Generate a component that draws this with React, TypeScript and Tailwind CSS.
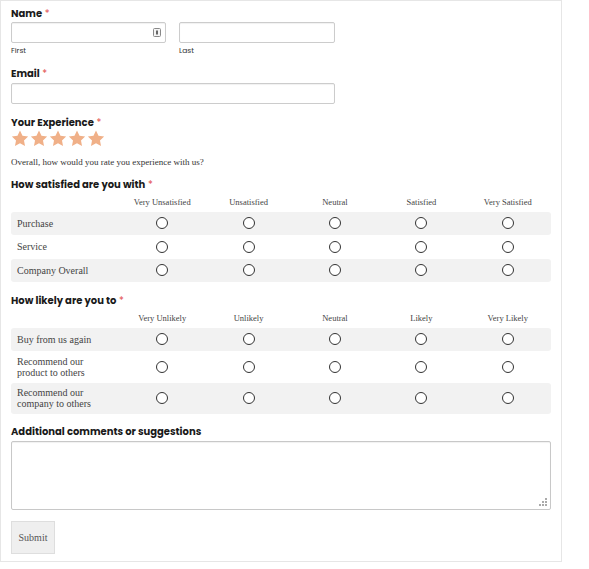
import React from "react";

const sans = { fontFamily: "Poppins, Inter, 'Noto Sans', sans-serif" };
const serif = { fontFamily: "'Liberation Serif', 'DejaVu Serif', serif" };

function Label({ children, req = true, className = "" }: { children: React.ReactNode; req?: boolean; className?: string }) {
  return (
    <div className={`text-[10px] font-bold text-[#1a1a1a] leading-[12px] ${className}`} style={sans}>
      {children}
      {req && <span className="text-[#e3504f] font-normal"> *</span>}
    </div>
  );
}

function Star() {
  return (
    <svg width="18" height="17" viewBox="0 0 24 23">
      <path d="M12 0.8l3.4 7 7.6 1-5.6 5.3 1.4 7.6L12 18l-6.8 3.7 1.4-7.6L1 8.8l7.6-1z" fill="#f0b088" />
    </svg>
  );
}

function Radio() {
  return <div className="w-[12px] h-[12px] rounded-full border border-[#333] bg-white" />;
}

function Matrix({ cols, rows }: { cols: string[]; rows: { label: string[]; shaded: boolean; h: number }[] }) {
  return (
    <div className="w-[540px]" style={serif}>
      <div className="grid grid-cols-[108px_repeat(5,1fr)] h-[18px] items-center">
        <div />
        {cols.map((c) => (
          <div key={c} className="text-center text-[8.5px] text-[#444] leading-none">{c}</div>
        ))}
      </div>
      {rows.map((r, i) => (
        <div
          key={i}
          className={`grid grid-cols-[108px_repeat(5,1fr)] items-center rounded-[3px] ${r.shaded ? "bg-[#f2f2f2]" : ""}`}
          style={{ height: r.h }}
        >
          <div className="pl-[6px] text-[10px] text-[#444] leading-[11px]">
            {r.label.map((l, j) => (
              <div key={j}>{l}</div>
            ))}
          </div>
          {cols.map((c) => (
            <div key={c} className="flex justify-center">
              <Radio />
            </div>
          ))}
        </div>
      ))}
    </div>
  );
}

export default function App() {
  return (
    <div className="w-[589px] h-[569px] bg-white">
      <div className="w-[562px] h-[562px] border border-[#e6e6e6] pl-[10px] pt-[7px]">
        <Label>Name</Label>
        <div className="flex gap-[13px] mt-[2px]">
          <div>
            <div className="w-[155px] h-[21px] border border-[#ccc] rounded-[2px] shadow-[inset_0_1px_1px_rgba(0,0,0,0.06)] flex items-center justify-end pr-[4px]">
              <svg width="8" height="9" viewBox="0 0 8 9">
                <rect x="0.5" y="0.5" width="7" height="8" rx="1" fill="#f4f4f4" stroke="#888" />
                <rect x="3" y="2.5" width="2" height="4" fill="#666" />
              </svg>
            </div>
            <div className="text-[7.5px] text-[#333] mt-[3px] leading-[9px]" style={sans}>First</div>
          </div>
          <div>
            <div className="w-[156px] h-[21px] border border-[#ccc] rounded-[2px] shadow-[inset_0_1px_1px_rgba(0,0,0,0.06)]" />
            <div className="text-[7.5px] text-[#333] mt-[3px] leading-[9px]" style={sans}>Last</div>
          </div>
        </div>
        <Label className="mt-[13px]">Email</Label>
        <div className="w-[324px] h-[21px] border border-[#ccc] rounded-[2px] mt-[3px] shadow-[inset_0_1px_1px_rgba(0,0,0,0.06)]" />

        <Label className="mt-[13px]">Your Experience</Label>
        <div className="flex gap-[1px] mt-[1px]">
          <Star />
          <Star />
          <Star />
          <Star />
          <Star />
        </div>
        <div className="text-[9px] text-[#333] mt-[9px]" style={serif}>
          Overall, how would you rate you experience with us?
        </div>

        <Label className="mt-[9px]">How satisfied are you with</Label>
        <div className="mt-[3px]">
          <Matrix
            cols={["Very Unsatisfied", "Unsatisfied", "Neutral", "Satisfied", "Very Satisfied"]}
            rows={[
              { label: ["Purchase"], shaded: true, h: 23 },
              { label: ["Service"], shaded: false, h: 24 },
              { label: ["Company Overall"], shaded: true, h: 23 },
            ]}
          />
        </div>

        <Label className="mt-[13px]">How likely are you to</Label>
        <div className="mt-[3px]">
          <Matrix
            cols={["Very Unlikely", "Unlikely", "Neutral", "Likely", "Very Likely"]}
            rows={[
              { label: ["Buy from us again"], shaded: true, h: 23 },
              { label: ["Recommend our", "product to others"], shaded: false, h: 32 },
              { label: ["Recommend our", "company to others"], shaded: true, h: 31 },
            ]}
          />
        </div>

        <Label className="mt-[12px]" req={false}>Additional comments or suggestions</Label>
        <div className="relative w-[540px] h-[69px] border border-[#c8c8c8] rounded-[2px] mt-[3px] shadow-[inset_0_1px_1px_rgba(0,0,0,0.06)]">
          <svg className="absolute right-[3px] bottom-[3px]" width="8" height="8" viewBox="0 0 8 8">
            <rect x="6" y="0" width="2" height="2" fill="#aaa" />
            <rect x="3" y="3" width="2" height="2" fill="#aaa" />
            <rect x="6" y="3" width="2" height="2" fill="#aaa" />
            <rect x="0" y="6" width="2" height="2" fill="#aaa" />
            <rect x="3" y="6" width="2" height="2" fill="#aaa" />
            <rect x="6" y="6" width="2" height="2" fill="#aaa" />
          </svg>
        </div>
        <div className="mt-[11px] w-[44px] h-[33px] bg-[#efefef] border border-[#dedede] flex items-center justify-center text-[10px] text-[#555]" style={serif}>
          Submit
        </div>
      </div>
    </div>
  );
}
